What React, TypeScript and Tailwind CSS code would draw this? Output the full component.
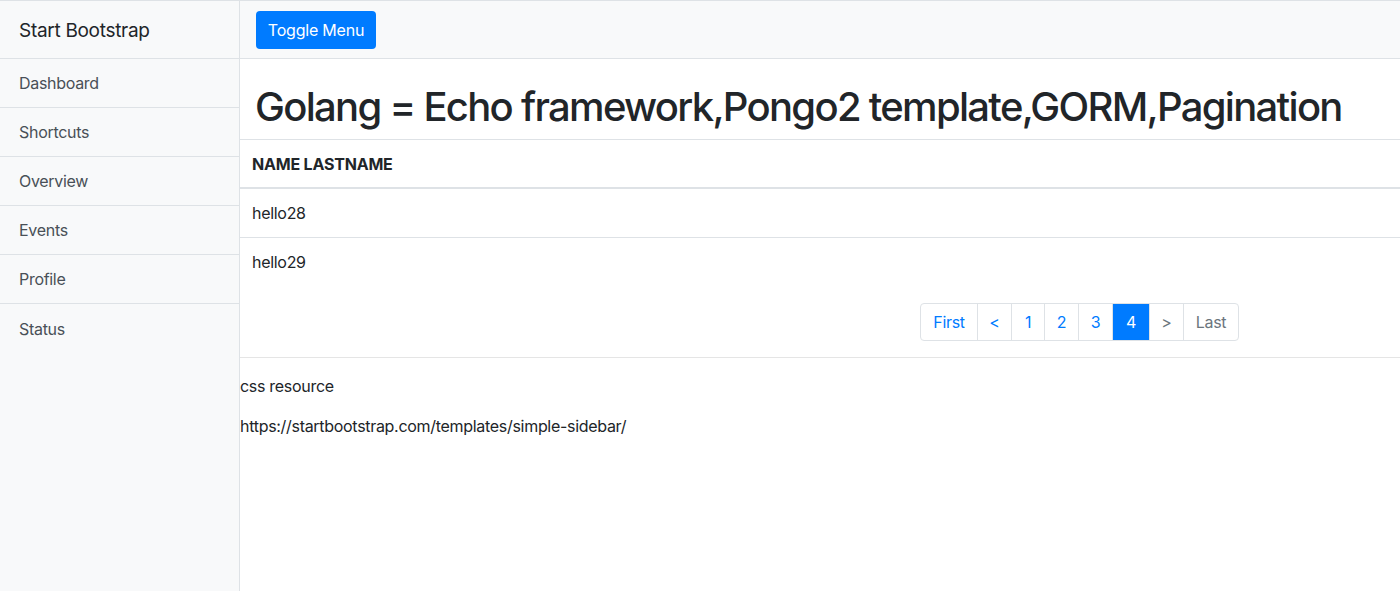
const menu = ["Dashboard", "Shortcuts", "Overview", "Events", "Profile", "Status"];
const rows = ["hello28", "hello29"];

function Pagination() {
  const item = "flex h-[36px] items-center justify-center border-l border-[#dee2e6] first:border-l-0";
  return (
    <div className="flex h-[38px] overflow-hidden rounded-[4px] border border-[#dee2e6] text-[16px]">
      <span className={`${item} w-[56px] text-[#007bff]`}>First</span>
      <span className={`${item} w-[34px] text-[#007bff]`}>&lt;</span>
      <span className={`${item} w-[33px] text-[#007bff]`}>1</span>
      <span className={`${item} w-[34px] text-[#007bff]`}>2</span>
      <span className={`${item} w-[34px] text-[#007bff]`}>3</span>
      <span className={`${item} w-[37px] border-[#007bff] bg-[#007bff] text-white`}>4</span>
      <span className={`${item} w-[34px] text-[#6c757d]`}>&gt;</span>
      <span className={`${item} w-[55px] text-[#6c757d]`}>Last</span>
    </div>
  );
}

export default function App() {
  return (
    <div className="flex min-h-[591px] border-t border-[#dee2e6] bg-white font-['Inter',sans-serif] text-[16px] tracking-[-0.3px] text-[#212529]">
      {/* sidebar */}
      <aside className="w-[240px] shrink-0 border-r border-[#dee2e6] bg-[#f8f9fa]">
        <div className="flex h-[58px] items-center border-b border-[#dee2e6] px-[19px] pt-[3px] text-[19px]">
          Start Bootstrap
        </div>
        {menu.map((m, i) => (
          <div
            key={m}
            className={`flex h-[49px] items-center px-[19px] text-[#495057] ${
              i < menu.length - 1 ? "border-b border-[#dee2e6]" : ""
            }`}
          >
            {m}
          </div>
        ))}
      </aside>

      {/* page content */}
      <main className="min-w-0 flex-1">
        <nav className="flex h-[58px] items-center border-b border-[#dee2e6] bg-[#f8f9fa] px-4">
          <button className="h-[38px] w-[120px] rounded-[4px] bg-[#007bff] tracking-[-0.2px] text-white">
            Toggle Menu
          </button>
        </nav>

        <div className="px-[15px]">
          <h1 className="mt-6 mb-2 whitespace-nowrap text-[40px] font-medium leading-[48px] tracking-[-1.7px]">
            Golang = Echo framework,Pongo2 template,GORM,Pagination
          </h1>
        </div>

        {/* table */}
        <div className="flex h-[50px] items-center border-t border-b-2 border-[#dee2e6] px-3 text-[16px] font-bold uppercase tracking-[-0.2px]">
          Name Lastname
        </div>
        {rows.map((r, i) => (
          <div
            key={r}
            className={`flex items-center px-3 ${
              i === 0 ? "h-[49px] border-b border-[#dee2e6]" : "h-[48px]"
            }`}
          >
            {r}
          </div>
        ))}

        <div className="mt-[17px] flex pl-[680px]">
          <Pagination />
        </div>

        <hr className="my-4 border-t border-[#e5e5e5]" />

        <p className="mb-4 leading-6">css resource</p>
        <p className="mb-4 leading-6">https://startbootstrap.com/templates/simple-sidebar/</p>
      </main>
    </div>
  );
}
